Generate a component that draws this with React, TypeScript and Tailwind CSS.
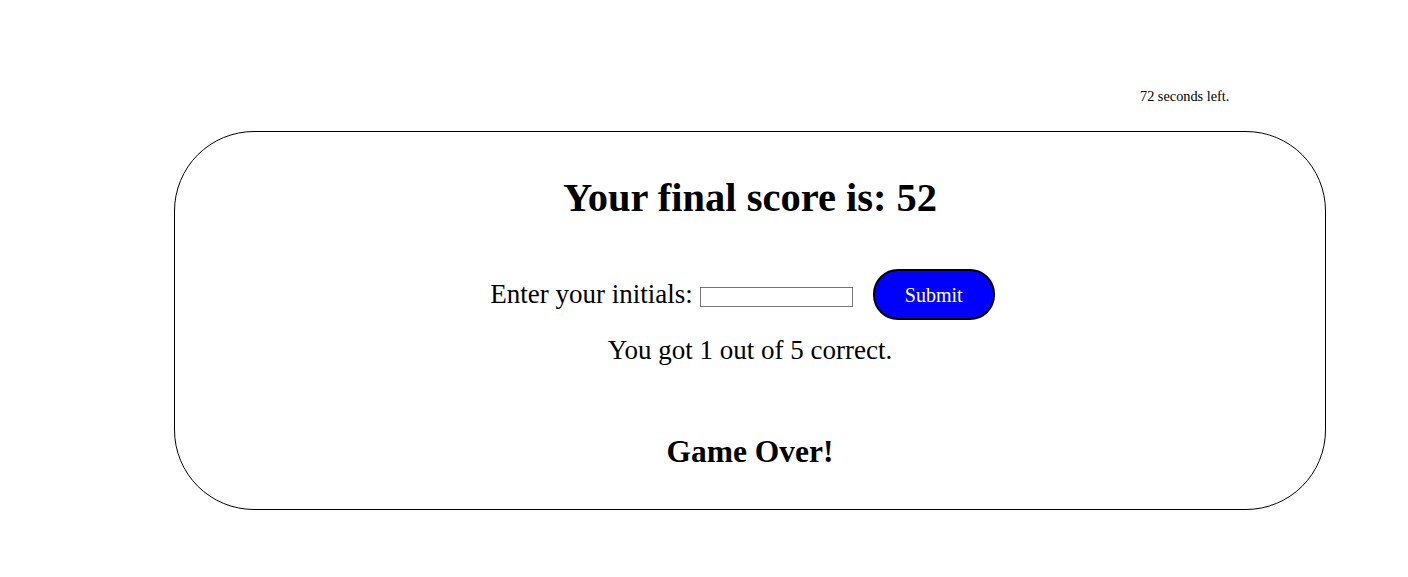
export default function App() {
  return (
    <div className="min-h-[577px] bg-white text-black" style={{ fontFamily: '"Liberation Serif", "Times New Roman", serif' }}>
      <div className="pt-[88px] pl-[1140px] text-[14.3px] leading-[16px]">72 seconds left.</div>
      <div className="ml-[174px] mt-[27px] flex h-[379px] w-[1152px] flex-col items-center rounded-[80px] border border-black">
        <h1 className="mt-[43px] text-[40.5px] font-bold leading-[46px]">Your final score is: 52</h1>
        <div className="mt-[48px] flex items-center pr-[15px]">
          <span className="text-[27px] leading-[31px]">Enter your initials:</span>
          <input
            type="text"
            className="ml-[7px] mt-[4px] h-[20px] w-[153px] border border-[#767676] bg-white"
          />
          <button className="ml-[20px] h-[51px] w-[122px] rounded-[25px] border-2 border-black bg-[#0000ff] text-[20px] text-white">
            Submit
          </button>
        </div>
        <p className="mt-[15px] text-[27px] leading-[31px]">You got 1 out of 5 correct.</p>
        <h2 className="mt-[68px] text-[31.5px] font-bold leading-[36px]">Game Over!</h2>
      </div>
    </div>
  );
}
